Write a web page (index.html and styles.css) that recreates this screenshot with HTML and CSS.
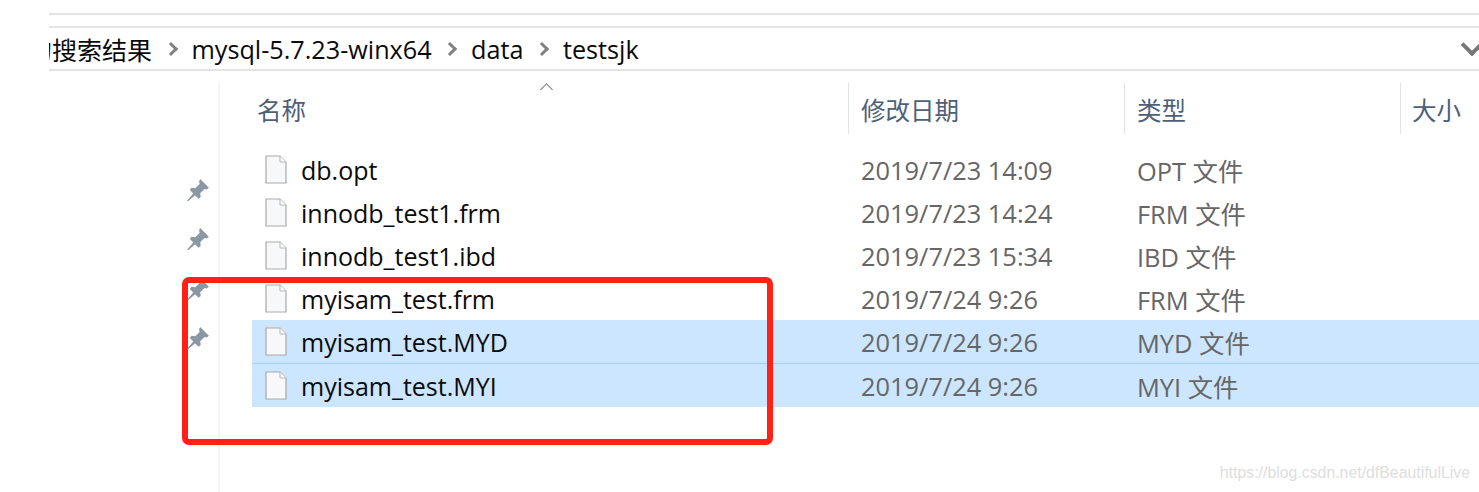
FILE: index.html
```html
<!DOCTYPE html>
<html lang="en">
<head>
  <meta charset="UTF-8" />
  <title>testsjk</title>
  <link rel="stylesheet" href="styles.css">
</head>
<body>

  <svg width="0" height="0" class="defs">
    <symbol id="file" viewBox="0 0 22 29">
      <path d="M1 1H15L21 7V28H1Z" fill="#f7f8f9" stroke="#a9a9a9" stroke-width="1.2"/>
      <path d="M15 1V7H21" fill="#fff" stroke="#b5b5b5" stroke-width="1"/>
    </symbol>
    <symbol id="pin" viewBox="0 0 22 22">
      <path d="M13 1L21 9L19 10.500L17 10L13 14L13.500 17.500L11.500 19L3.500 11L5 9L8.500 9.500L12.500 5.500L12 3Z" fill="#8b98a3"/>
      <path d="M7 14.500L1.500 21L8 15.500Z" fill="#8b98a3" stroke="#8b98a3"/>
    </symbol>
  </svg>

  <div class="rule-top"></div>

  <div class="crumbs">
    <div class="crumb-list">
      <span class="crumb crumb-cut">的搜索结果</span>
      <span class="sep"></span>
      <span class="crumb">mysql-5.7.23-winx64</span>
      <span class="sep"></span>
      <span class="crumb">data</span>
      <span class="sep"></span>
      <span class="crumb">testsjk</span>
    </div>
    <span class="drop"></span>
  </div>

  <main class="pane">
    <aside class="quick">
      <svg class="pin"><use href="#pin"/></svg>
      <svg class="pin"><use href="#pin"/></svg>
      <svg class="pin"><use href="#pin"/></svg>
      <svg class="pin"><use href="#pin"/></svg>
    </aside>

    <section class="files">
      <div class="head">
        <div class="col col-name">名称<span class="sort"></span></div>
        <div class="col col-date">修改日期</div>
        <div class="col col-type">类型</div>
        <div class="col col-size">大小</div>
      </div>

      <div class="row">
        <span class="name"><svg class="icon"><use href="#file"/></svg>db.opt</span>
        <span class="date">2019/7/23 14:09</span>
        <span class="type">OPT 文件</span>
      </div>
      <div class="row">
        <span class="name"><svg class="icon"><use href="#file"/></svg>innodb_test1.frm</span>
        <span class="date">2019/7/23 14:24</span>
        <span class="type">FRM 文件</span>
      </div>
      <div class="row">
        <span class="name"><svg class="icon"><use href="#file"/></svg>innodb_test1.ibd</span>
        <span class="date">2019/7/23 15:34</span>
        <span class="type">IBD 文件</span>
      </div>
      <div class="row">
        <span class="name"><svg class="icon"><use href="#file"/></svg>myisam_test.frm</span>
        <span class="date">2019/7/24 9:26</span>
        <span class="type">FRM 文件</span>
      </div>
      <div class="row selected">
        <span class="name"><svg class="icon"><use href="#file"/></svg>myisam_test.MYD</span>
        <span class="date">2019/7/24 9:26</span>
        <span class="type">MYD 文件</span>
      </div>
      <div class="row selected">
        <span class="name"><svg class="icon"><use href="#file"/></svg>myisam_test.MYI</span>
        <span class="date">2019/7/24 9:26</span>
        <span class="type">MYI 文件</span>
      </div>
    </section>
  </main>

  <div class="mark-box"></div>
  <div class="watermark">https://blog.csdn.net/dfBeautifulLive</div>

</body>
</html>
```

FILE: styles.css
```css
body {
  margin: 0; padding: 0 0 0 49px;
  width: 1430px; height: 492px; overflow: hidden;
  background: #fff; color: #0a0a0a;
  font-family: "Open Sans", "Noto Sans CJK SC", sans-serif;
  font-size: 25px;
  position: relative;
}
.defs { position: absolute; }

.rule-top { height: 13px; border-bottom: 2px solid #e3e3e3; }

.crumbs {
  display: flex; justify-content: space-between; align-items: center;
  height: 41px; margin-top: 11px;
  border-top: 2px solid #e6e6e6; border-bottom: 2px solid #e3e3e3;
  overflow: hidden;
}
.crumb-list { display: flex; align-items: center; }
.crumb { white-space: nowrap; font-size: 25.2px; }
.crumb-cut { width: 103px; direction: rtl; overflow: hidden; font-size: 25px; }
.sep {
  width: 7px; height: 7px; margin: 0 16px 0 13.500px;
  border-top: 3px solid #808080; border-right: 3px solid #808080;
  transform: rotate(45deg);
}
.drop {
  width: 12px; height: 12px; margin: 0 -1px 8px 0;
  border-right: 4px solid #777; border-bottom: 4px solid #777;
  transform: rotate(45deg);
}

.pane { display: flex; margin-top: 12px; }

.quick {
  width: 171px; height: 409px; box-sizing: border-box;
  border-right: 2px solid #f4f4f4;
  display: flex; flex-direction: column; align-items: flex-end;
  gap: 25.3px; padding: 95px 8px 0 0;
}
.pin { width: 24px; height: 24px; }

.files { flex: 1; padding-left: 32px; }

.head { display: flex; height: 51px; color: #4d6078; font-size: 24.5px; margin-bottom: 14px; }
.col { position: relative; padding-top: 9px; box-sizing: border-box; }
.col-name { width: 596px; padding-left: 5px; }
.col-date { width: 276px; padding-left: 12px; border-left: 1px solid #e2e2e2; }
.col-type { width: 276px; padding-left: 12px; border-left: 1px solid #e2e2e2; }
.col-size { flex: 1; padding-left: 11px; border-left: 1px solid #e2e2e2; }
.sort {
  position: absolute; left: 290px; top: 2px;
  width: 8px; height: 8px;
  border-top: 1px solid #777; border-left: 1px solid #777;
  transform: rotate(45deg);
}

.row { display: flex; align-items: center; height: 43px; }
.row.selected { background: #cce6ff; border-bottom: 1px solid #a2d0fb; }
.row.selected:last-child { border-bottom: 0; }
.name { width: 595px; display: flex; align-items: center; }
.icon { width: 22px; height: 29px; margin: 0 14px 0 13px; }
.date { width: 276px; padding-left: 14px; box-sizing: border-box; color: #666; font-size: 25.4px; }
.type { padding-left: 14px; color: #666; font-size: 25.4px; }

.mark-box {
  position: absolute; left: 182px; top: 277px;
  width: 579px; height: 156px;
  border: 6px solid #ff2016; border-radius: 7px;
}
.watermark {
  position: absolute; right: 9px; top: 464px;
  font-family: "Liberation Sans", sans-serif; font-size: 15.850px;
  color: #dedede;
}
```
